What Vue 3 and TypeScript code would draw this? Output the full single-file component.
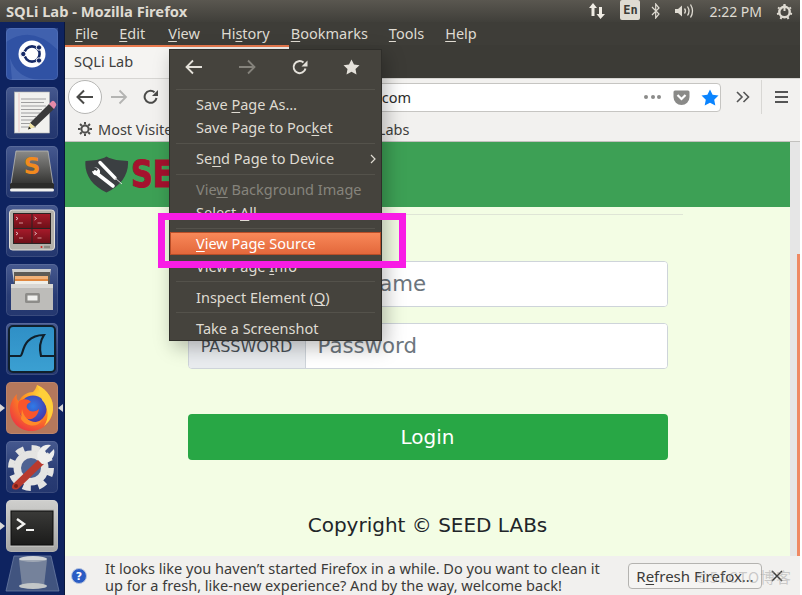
<script setup lang="ts">
const topMenus: [string, string, string][] = [
  ['', 'F', 'ile'],
  ['', 'E', 'dit'],
  ['', 'V', 'iew'],
  ['Hi', 's', 'tory'],
  ['', 'B', 'ookmarks'],
  ['', 'T', 'ools'],
  ['', 'H', 'elp'],
]
</script>

<template>
  <div class="screen">
    <header class="panel">
      <span class="win-title">SQLi Lab - Mozilla Firefox</span>
      <div class="tray">
        <svg class="tray-net" width="18" height="18" viewBox="0 0 18 18"><path d="M5 1 L9 6 H6.5 V14 H3.5 V6 H1 Z" fill="#f0ece4"/><path d="M12 16 L8 11 H10.5 V4 H13.5 V11 H16.5 Z" fill="#f0ece4" transform="translate(0.5 1)"/></svg>
        <span class="tray-en">En</span>
        <svg class="tray-bt" width="10" height="16" viewBox="0 0 10 16"><path d="M1 4 L8 11 L4.7 15 V1 L8 5 L1 12" fill="none" stroke="#dfdbd2" stroke-width="1.2"/></svg>
        <svg class="tray-vol" width="22" height="16" viewBox="0 0 22 16"><path d="M1 6 H4 L8 2.5 V13.5 L4 10 H1 Z" fill="#dfdbd2"/><path d="M10.5 5.5 Q12.5 8 10.5 10.5 M13.5 3.5 Q16.5 8 13.5 12.5 M16.5 1.5 Q20.5 8 16.5 14.5" fill="none" stroke="#dfdbd2" stroke-width="1.3"/></svg>
        <span class="clock">2:22 PM</span>
        <svg class="tray-pow" width="17" height="17" viewBox="0 0 17 17"><circle cx="8.5" cy="9" r="5.2" fill="none" stroke="#dfdbd2" stroke-width="2.4"/><path d="M8.5 1 V8" stroke="#dfdbd2" stroke-width="2"/><path d="M8.5 1.5 V3 M2 4.5 L3.5 5.5 M15 4.5 L13.5 5.5 M1 11 L3 10.5 M16 11 L14 10.5 M4.5 16 L5.5 14 M12.5 16 L11.5 14" stroke="#dfdbd2" stroke-width="2"/></svg>
      </div>
    </header>

    <div class="desk">
      <nav class="launcher">
        <div class="tile tile-ubuntu">
          <svg width="52" height="52" viewBox="0 0 52 52">
            <path d="M0 14 Q26 -4 52 22 V0 H0 Z" fill="#5f7fc4" opacity=".35"/>
            <path d="M4 30 Q10 50 34 52 H6 Z" fill="#6f8fd0" opacity=".3"/>
            <circle cx="26" cy="26" r="13.5" fill="#fff"/>
            <circle cx="26" cy="26" r="7.6" fill="none" stroke="#162a66" stroke-width="2.6"/>
            <circle cx="33" cy="19.5" r="2.7" fill="#162a66" stroke="#fff" stroke-width="1"/>
            <circle cx="17.3" cy="26" r="2.7" fill="#162a66" stroke="#fff" stroke-width="1"/>
            <circle cx="33" cy="32.5" r="2.7" fill="#162a66" stroke="#fff" stroke-width="1"/>
          </svg>
        </div>
        <div class="tile">
          <svg width="52" height="52" viewBox="0 0 52 52">
            <rect x="8.5" y="5" width="35" height="41" fill="#f1f1ee" stroke="#b4b4b0" stroke-width=".6"/>
            <path d="M13 6 V45" stroke="#e8a8a8" stroke-width=".6"/>
            <path d="M15 12 H40 M15 15.5 H38 M15 19 H40 M15 22.5 H36 M15 26 H34 M15 29.5 H30 M15 33 H27 M15 36.5 H24 M15 40 H30" stroke="#8a8a8a" stroke-width=".8"/>
            <path d="M24 36 L43 17 L48 22 L29 40 Z" fill="#3a3a3a"/>
            <path d="M43 17 L45.5 14.5 Q47 13 48.5 14.5 L50 16.5 Q51 18 49.5 19.5 L48 22 Z" fill="#e58aa8"/>
            <path d="M24 36 L29 40 L22 42.5 Z" fill="#efe2a0"/>
            <path d="M22 42.5 L23 39.5 L25 41.5 Z" fill="#222"/>
          </svg>
        </div>
        <div class="tile">
          <svg width="52" height="52" viewBox="0 0 52 52">
            <defs><linearGradient id="sublTop" x1="0" y1="0" x2="0" y2="1"><stop offset="0" stop-color="#8a8a88"/><stop offset="1" stop-color="#333331"/></linearGradient></defs>
            <path d="M10 5 H42 L47 38 H5 Z" fill="url(#sublTop)" stroke="#b9b9b5" stroke-width=".8"/>
            <rect x="4" y="37" width="44" height="6" rx="1.5" fill="#2b2b29"/>
            <rect x="4" y="42.5" width="44" height="3" rx="1.5" fill="#f2f2f0"/>
            <text x="26" y="28" text-anchor="middle" class="subl-s">S</text>
          </svg>
        </div>
        <div class="tile">
          <svg width="52" height="52" viewBox="0 0 52 52">
            <defs><linearGradient id="pane" x1="0" y1="0" x2="0" y2="1"><stop offset="0" stop-color="#a61a2a"/><stop offset="1" stop-color="#6e1018"/></linearGradient></defs>
            <rect x="3.5" y="5" width="45" height="40" rx="3" fill="#b3b1aa" stroke="#e2e0da" stroke-width="1"/>
            <rect x="7" y="8" width="38" height="31" fill="#2a2323"/>
            <rect x="8" y="9" width="17.5" height="14" fill="url(#pane)"/>
            <rect x="26.5" y="9" width="17.5" height="14" fill="url(#pane)"/>
            <rect x="8" y="24" width="17.5" height="14" fill="url(#pane)"/>
            <rect x="26.5" y="24" width="17.5" height="14" fill="url(#pane)"/>
            <path d="M10 12 L12 13.5 L10 15 M28.5 12 L30.5 13.5 L28.5 15 M10 27 L12 28.5 L10 30 M28.5 27 L30.5 28.5 L28.5 30" stroke="#fff" stroke-width=".7" fill="none"/>
            <path d="M13 18 H17 M31.5 18 H35.5 M13 33 H17 M31.5 33 H35.5" stroke="#f4c8c8" stroke-width=".7"/>
            <circle cx="35.5" cy="42" r="1" fill="#d02020"/>
            <rect x="38" y="40.8" width="6" height="2.4" fill="#8a8880"/>
          </svg>
        </div>
        <div class="tile">
          <svg width="52" height="52" viewBox="0 0 52 52">
            <path d="M6 5 H45 L43 19 H8 Z" fill="#cfcfcd"/>
            <rect x="8" y="8" width="36" height="14" fill="#5e5b56"/>
            <rect x="9" y="12" width="33" height="3" fill="#f2b279"/>
            <rect x="9" y="15" width="33" height="2" fill="#e08840"/>
            <rect x="9" y="17" width="33" height="4" fill="#f0efe8"/>
            <path d="M5 20 H47 V46 H5 Z" fill="#bdbcb9"/>
            <path d="M5 20 H47 V24 H5 Z" fill="#d8d7d4"/>
            <rect x="19" y="29" width="15" height="10" rx="1.5" fill="#8d8c89"/>
            <rect x="21.5" y="31.5" width="10" height="5" fill="#f0f0ee"/>
          </svg>
        </div>
        <div class="tile">
          <svg width="52" height="52" viewBox="0 0 52 52">
            <defs><linearGradient id="sharkBg" x1="0" y1="0" x2="0" y2="1"><stop offset="0" stop-color="#2f8fc6"/><stop offset="1" stop-color="#3ba0d2"/></linearGradient></defs>
            <rect x="3" y="3" width="46" height="46" rx="4" fill="url(#sharkBg)" stroke="#10202c" stroke-width="2"/>
            <path d="M4 33 H14 C17 33 16 24 22 18 C26 14 32 12 38 12 C34 18 33 25 35 33 H48" fill="none" stroke="#10202c" stroke-width="2.2"/>
          </svg>
        </div>
        <div class="tile tile-active">
          <svg width="52" height="52" viewBox="0 0 52 52">
            <defs>
              <radialGradient id="foxOuter" cx=".7" cy=".2" r="1"><stop offset="0" stop-color="#ffd43a"/><stop offset=".45" stop-color="#ff8a1e"/><stop offset="1" stop-color="#e8214a"/></radialGradient>
              <radialGradient id="foxGlobe" cx=".5" cy=".4" r=".7"><stop offset="0" stop-color="#2f7be8"/><stop offset="1" stop-color="#4a2a9a"/></radialGradient>
            </defs>
            <path d="M31 3 C42 8 48 18 47 28 C46 41 36 49 25 49 C13 49 4 39 4 28 C4 21 7 16 11 12 C10 16 11 18 13 19 C16 13 22 10 27 10 C29 8 30 6 31 3 Z" fill="url(#foxOuter)"/>
            <circle cx="27" cy="27" r="13.5" fill="url(#foxGlobe)"/>
            <path d="M31 3 C42 8 48 18 47 28 C46 36 42 41 38 44 C44 36 42 24 36 18 C36 13 33 8 31 3 Z" fill="#ffcf3a"/>
            <path d="M13 19 C18 16 23 17 25 20 C22 21 20 23 21 26 C24 31 30 30 33 27 C32 34 27 38 22 37 C14 35 10 27 13 19 Z" fill="#f9552c"/>
            <path d="M16 27 C18 38 28 43 36 38 C32 46 20 45 15 37 Z" fill="#ff8a2a"/>
          </svg>
        </div>
        <div class="tile">
          <svg width="52" height="52" viewBox="0 0 52 52">
            <circle cx="25" cy="27" r="17.5" fill="#e4e4e2"/>
            <circle cx="25" cy="27" r="20" fill="none" stroke="#e4e4e2" stroke-width="6" stroke-dasharray="8 7.7"/>
            <circle cx="25" cy="27" r="10" fill="#4e6292"/>
            <path d="M7 43 L33 18 L38 23 L12 48 Q8 49.5 6 47 Q5.5 45 7 43 Z" fill="#b83a2e"/>
            <path d="M32 19 Q29 10 37 5 Q41 3 45 4 L39 10 L42 14 L48 8 Q49.5 14 45 19 Q41 23 36 23 Z" fill="#eeeeec"/>
            <circle cx="10" cy="45" r="2" fill="#7c1e16"/>
          </svg>
        </div>
        <div class="tile tile-term">
          <svg width="52" height="52" viewBox="0 0 52 52">
            <rect x="4" y="9" width="44" height="38" fill="#bdbdba"/>
            <defs><linearGradient id="termBg" x1="0" y1="0" x2="0" y2="1"><stop offset="0" stop-color="#3a3a38"/><stop offset="1" stop-color="#1b1b1a"/></linearGradient></defs>
            <rect x="5" y="11" width="42" height="34" fill="url(#termBg)" stroke="#0c0c0c" stroke-width="1"/>
            <path d="M11 19 L18 24 L11 29" fill="none" stroke="#f2f2f0" stroke-width="2.4"/>
            <path d="M20 30 H28" stroke="#f2f2f0" stroke-width="2"/>
          </svg>
        </div>
        <div class="trash">
          <svg width="60" height="40" viewBox="0 0 60 40">
            <path d="M11 1 H48 L56 36 H3 Z" fill="#41547f" stroke="#6a7ba2" stroke-width=".8"/>
            <ellipse cx="30" cy="4" rx="14" ry="3" fill="#d0d3d6"/>
            <path d="M16 5 L19 31 H41 L44 5 Z" fill="#8c95a6" opacity=".7"/>
            <ellipse cx="30" cy="31" rx="14" ry="3" fill="#c3c7c8"/>
          </svg>
        </div>
        <i class="pip pip-l pip-fox"></i>
        <i class="pip pip-r pip-fox"></i>
        <i class="pip pip-l pip-term"></i>
      </nav>

      <main class="window">
        <div class="menubar">
          <span v-for="m in topMenus" :key="m[1] + m[2]">{{ m[0] }}<u>{{ m[1] }}</u>{{ m[2] }}</span>
        </div>

        <div class="tabbar">
          <div class="tab">SQLi Lab</div>
        </div>

        <div class="navbar">
          <button class="back">
            <svg width="20" height="20" viewBox="0 0 20 20"><path d="M18 10 H3 M9 3.5 L2.5 10 L9 16.5" fill="none" stroke="#4a4a48" stroke-width="2"/></svg>
          </button>
          <svg class="fwd" width="18" height="18" viewBox="0 0 18 18"><path d="M1 9 H15 M9.5 2.5 L16 9 L9.5 15.5" fill="none" stroke="#b4b4b2" stroke-width="1.8"/></svg>
          <svg class="rld" width="16" height="16" viewBox="0 0 16 16"><path d="M13.5 9 A6 6 0 1 1 11.5 3.2" fill="none" stroke="#4a4a48" stroke-width="2"/><path d="M15 1 V7 H9 Z" fill="#4a4a48"/></svg>
          <div class="urlbar">
            <span class="url">www.seedlabsqlinjection.com</span>
            <span class="dots"><i></i><i></i><i></i></span>
            <svg class="pocket" width="17" height="15" viewBox="0 0 17 15"><path d="M2 0.5 H15 Q16.5 0.5 16.5 2 V7 A8 8 0 0 1 0.5 7 V2 Q0.5 0.5 2 0.5 Z" fill="#8a8a88"/><path d="M4.5 5 L8.5 9 L12.5 5" fill="none" stroke="#fff" stroke-width="2.2"/></svg>
            <svg class="star" width="18" height="17" viewBox="0 0 18 17"><path d="M9 0.5 L11.6 5.8 L17.5 6.6 L13.2 10.7 L14.3 16.5 L9 13.7 L3.7 16.5 L4.8 10.7 L0.5 6.6 L6.4 5.8 Z" fill="#0a84ff"/></svg>
          </div>
          <svg class="more" width="14" height="12" viewBox="0 0 14 12"><path d="M1 1 L6 6 L1 11 M7.5 1 L12.5 6 L7.5 11" fill="none" stroke="#555" stroke-width="1.6"/></svg>
          <i class="divider"></i>
          <svg class="burger" width="13" height="12" viewBox="0 0 13 12"><path d="M0 1 H13 M0 6 H13 M0 11 H13" stroke="#555" stroke-width="2"/></svg>
        </div>

        <div class="bookmarks">
          <svg class="gear" width="14" height="14" viewBox="0 0 14 14"><circle cx="7" cy="7" r="3.6" fill="none" stroke="#4f4f4d" stroke-width="2"/><path d="M7 0 V2.5 M7 11.5 V14 M0 7 H2.5 M11.5 7 H14 M2 2 L3.8 3.8 M10.2 10.2 L12 12 M2 12 L3.8 10.2 M10.2 3.8 L12 2" stroke="#4f4f4d" stroke-width="2"/></svg>
          <span>Most Visited</span>
          <span class="bm-labs">SEED Labs</span>
        </div>

        <div class="content">
          <div class="page">
            <div class="hero">
              <svg class="shield" width="44" height="37" viewBox="0 0 44 37">
                <path d="M21.5 0.5 C27 4 35 4.5 43 5 C44 18 36 30 21.5 36.5 C7 30 -1 18 0.5 5 C8 4.5 16 4 21.5 0.5 Z" fill="#3b3f42"/>
                <path d="M15 6.5 L30 22" stroke="#fff" stroke-width="3.4" stroke-linecap="round"/>
                <path d="M30 22 L37 28" stroke="#d9d9d9" stroke-width="1"/>
                <path d="M10 16 L28 30" stroke="#fff" stroke-width="3.6" stroke-linecap="round"/>
                <path d="M9 11 L13 13 L11 16 L7 15 Q8 20 12 19 L15 17 Q16 12 9 11 Z" fill="#fff"/>
              </svg>
              <span class="brand">SEED</span>
            </div>
            <div class="body">
              <hr class="rule" />
              <form class="form" @submit.prevent>
                <div class="group">
                  <span class="addon">USERNAME</span>
                  <input class="field" type="text" placeholder="Username" />
                </div>
                <div class="group">
                  <span class="addon">PASSWORD</span>
                  <input class="field" type="password" placeholder="Password" />
                </div>
                <button class="login" type="button">Login</button>
              </form>
              <p class="copy">Copyright © SEED LABs</p>
            </div>
          </div>
          <div class="scroll"><i></i></div>
        </div>

        <div class="notice">
          <svg class="q" width="16" height="16" viewBox="0 0 16 16">
            <circle cx="8" cy="8" r="7.5" fill="#2a5cc4" stroke="#b8c4de" stroke-width="1"/>
            <text x="8" y="12" text-anchor="middle" class="q-mark">?</text>
          </svg>
          <p class="notice-text">It looks like you haven’t started Firefox in a while. Do you want to clean it<br />up for a fresh, like-new experience? And by the way, welcome back!</p>
          <button class="refresh">R<u>e</u>fresh Firefox…</button>
          <svg class="close" width="12" height="12" viewBox="0 0 12 12"><path d="M1 1 L11 11 M11 1 L1 11" stroke="#3c3c3a" stroke-width="1.5"/></svg>
          <span class="mark">©51CTO博客</span>
        </div>

        <div class="ctx">
          <div class="ctx-nav">
            <svg width="18" height="16" viewBox="0 0 18 16"><path d="M17 8 H2 M8 1.5 L1.5 8 L8 14.5" fill="none" stroke="#e4e1da" stroke-width="1.8"/></svg>
            <svg width="18" height="16" viewBox="0 0 18 16"><path d="M1 8 H16 M10 1.5 L16.5 8 L10 14.5" fill="none" stroke="#85837c" stroke-width="1.8"/></svg>
            <svg width="16" height="16" viewBox="0 0 16 16"><path d="M13.5 9.5 A6 6 0 1 1 11.5 3.5" fill="none" stroke="#e4e1da" stroke-width="2"/><path d="M15.5 1.5 V7.5 H9.5 Z" fill="#e4e1da"/></svg>
            <svg width="17" height="16" viewBox="0 0 17 16"><path d="M8.5 0.5 L11 5.5 L16.5 6.2 L12.5 10 L13.5 15.5 L8.5 12.8 L3.5 15.5 L4.5 10 L0.5 6.2 L6 5.5 Z" fill="#e4e1da"/></svg>
          </div>
          <div class="sep"></div>
          <div class="item">Save <u>P</u>age As…</div>
          <div class="item">Save Page to Poc<u>k</u>et</div>
          <div class="sep"></div>
          <div class="item item-sub"><span>Se<u>n</u>d Page to Device</span><svg width="6" height="10" viewBox="0 0 6 10"><path d="M1 1 L5 5 L1 9" fill="none" stroke="#dfdbd2" stroke-width="1.2"/></svg></div>
          <div class="sep"></div>
          <div class="item off">Vie<u>w</u> Background Image</div>
          <div class="item">Select <u>A</u>ll</div>
          <div class="sep sep-tight"></div>
          <div class="item hot"><u>V</u>iew Page Source</div>
          <div class="item">View Page <u>I</u>nfo</div>
          <div class="sep"></div>
          <div class="item">Inspect Element (<u>Q</u>)</div>
          <div class="sep"></div>
          <div class="item">Take a Screenshot</div>
        </div>
      </main>
    </div>
    <div class="callout"></div>
  </div>
</template>

<style>
html, body { background: #fff; }
</style>

<style scoped>
.screen {
  position: relative;
  width: 800px;
  height: 595px;
  overflow: hidden;
  display: flex;
  flex-direction: column;
  font-family: "Noto Sans", sans-serif;
  font-size: 14.5px;
}
u { text-underline-offset: 2px; text-decoration-thickness: 1px; }
.panel {
  height: 22px;
  flex: none;
  display: flex;
  align-items: center;
  justify-content: space-between;
  background: linear-gradient(#5a5750, #403f3a);
  color: #dfdbd2;
}
.win-title { margin-left: 6px; font-weight: 700; font-size: 14.7px; white-space: nowrap; }
.tray { display: flex; align-items: center; height: 22px; }
.tray-net { margin-right: 14px; }
.tray-en {
  width: 20px; height: 20px; margin-top: -2px; margin-right: 11px;
  background: #dfdbd2; color: #3c3b37; border-radius: 2px;
  font: 700 12px "DejaVu Sans Mono", monospace;
  display: flex; align-items: center; justify-content: center;
}
.tray-bt { margin-right: 13px; }
.tray-vol { margin-right: 13px; }
.clock { font-size: 14px; margin-right: 14px; white-space: nowrap; }
.tray-pow { margin-right: 7px; }

.desk { flex: 1; display: flex; min-height: 0; }
.launcher {
  position: relative;
  width: 65px;
  flex: none;
  box-sizing: border-box;
  background: #0e2360;
  border-right: 1px solid #0a173c;
  padding: 6px 0 0 6px;
  display: flex;
  flex-direction: column;
  gap: 7px;
  overflow: hidden;
}
.tile {
  width: 52px;
  height: 52px;
  flex: none;
  border-radius: 5px;
  background: linear-gradient(#46598f, #2a3d75 60%, #24376f);
  box-shadow: inset 0 0 0 1px rgba(255,255,255,.1);
}
.tile svg { display: block; }
.tile-ubuntu { background: #3052a4; }
.tile-active { background: #b4785c; }
.tile-term { background: linear-gradient(#cfcfcd, #a6a6a4); }
.subl-s { font: 700 23px "DejaVu Sans", sans-serif; fill: #f28a1e; }
.trash { margin: -4px 0 0 -3px; flex: none; height: 40px; }
.trash svg { display: block; }
.pip { position: absolute; width: 0; height: 0; border-style: solid; border-color: transparent; }
.pip-l { left: 0; border-width: 4px 0 4px 5px; border-left-color: #d8d8d8; }
.pip-r { right: 1px; border-width: 4px 5px 4px 0; border-right-color: #d8d8d8; }
.pip-fox { top: 382px; }
.pip-term { top: 500px; }

.window { position: relative; flex: 1; min-width: 0; display: flex; flex-direction: column; }
.menubar {
  height: 23px; flex: none;
  display: flex; align-items: center; gap: 21px;
  padding: 0 0 1px 10px;
  box-sizing: border-box;
  background: #3e3d38;
  color: #dfdbd2;
  white-space: nowrap;
}
.menubar span:nth-child(2) { margin-right: 2px; }
.tabbar { height: 33px; flex: none; background: #3c3b36; display: flex; }
.tab {
  width: 224px; box-sizing: border-box;
  background: #f5f4f2; border-top: 2px solid #ea7a4e;
  padding: 4px 0 0 9px;
  color: #3f3f3d;
}
.navbar {
  height: 38px; flex: none;
  display: flex; align-items: center;
  background: #f2f1ef;
  box-shadow: inset 0 1px 0 #d6d5d2;
  padding-left: 3px;
}
.back {
  width: 34px; height: 34px; padding: 0; flex: none;
  border-radius: 50%; border: 1px solid #b6b6b4; background: #fff;
  display: flex; align-items: center; justify-content: center;
}
.fwd { margin-left: 8px; flex: none; }
.rld { margin-left: 15px; flex: none; }
.urlbar {
  margin-left: 10px;
  width: 552px; height: 29px; flex: none; box-sizing: border-box;
  background: #fff; border: 1px solid #c6c5c2; border-radius: 4px;
  display: flex; align-items: center;
  color: #2c2c2a;
}
.url { width: 241px; margin-right: 1px; flex: none; text-align: right; white-space: nowrap; overflow: hidden; direction: rtl; }
.dots { margin-left: 232px; display: flex; gap: 2.5px; }
.dots i { width: 4px; height: 4px; border-radius: 50%; background: #8b8b89; }
.pocket { margin-left: 12px; flex: none; }
.star { margin-left: 11px; flex: none; }
.more { margin-left: 15px; flex: none; }
.divider { width: 1px; height: 34px; margin-left: 11px; background: #d8d7d4; flex: none; }
.burger { margin-left: 13px; flex: none; }
.bookmarks {
  height: 26px; flex: none; box-sizing: border-box;
  display: flex; align-items: center;
  background: #f2f1ef; border-bottom: 1px solid #c2c1be;
  padding-left: 13px;
  color: #3f3f3d;
  white-space: nowrap;
}
.gear { margin-right: 6px; flex: none; }
.bm-labs { margin-left: 158px; }

.content { flex: 1; min-height: 0; display: flex; }
.page { flex: 1; min-width: 0; background: #f3fde4; display: flex; flex-direction: column; }
.hero {
  height: 65px; flex: none;
  background: #3da055;
  display: flex; align-items: center;
  padding-left: 20px;
  overflow: hidden;
}
.shield { flex: none; margin-top: -1px; }
.brand {
  margin-left: 2px;
  font: 700 37px "DejaVu Sans", sans-serif;
  color: #a5112e;
  -webkit-text-stroke: 1px #a5112e;
  transform: scaleX(.82);
  transform-origin: left center;
  line-height: 1;
}
.body { flex: 1; display: flex; flex-direction: column; align-items: center; font-family: "DejaVu Sans", sans-serif; }
.rule { width: 510px; margin: 7px 0 0; border: 0; border-top: 1px solid #dfe5d6; height: 0; }
.form { width: 480px; margin-top: 46px; display: flex; flex-direction: column; gap: 16px; }
.group {
  height: 46px; box-sizing: border-box;
  display: flex;
  border: 1px solid #ced4da; border-radius: 4px;
  background: #fff;
  overflow: hidden;
}
.addon {
  width: 117px; flex: none; box-sizing: border-box;
  background: #e9ecef; border-right: 1px solid #ced4da;
  display: flex; align-items: center; justify-content: center;
  font-size: 16px; color: #495057;
}
.field {
  flex: 1; min-width: 0; border: 0; outline: 0;
  padding: 0 12px 2px;
  font: 21.3px "DejaVu Sans", sans-serif;
  background: #fff;
}
.field::placeholder { color: #6c757d; opacity: 1; }
.login {
  height: 46px; margin-top: 29px;
  background: #28a745; color: #fff;
  border: 0; border-radius: 4px;
  font: 20px "DejaVu Sans", sans-serif;
}
.copy { margin: 53px 0 0; font-size: 20px; color: #212529; line-height: 24px; }
.scroll { position: relative; width: 10px; flex: none; background: #e6e6e6; }
.scroll i { position: absolute; right: 0; top: 112px; bottom: 0; width: 3px; background: #ef8a64; }

.notice {
  position: relative;
  height: 39px; flex: none; box-sizing: border-box;
  display: flex; align-items: center;
  background: #f1f0ee;
  color: #3b3b39;
}
.q { margin-left: 6px; flex: none; }
.q-mark { font: 700 11px "DejaVu Sans", sans-serif; fill: #fff; }
.notice-text { margin: 2px 0 0 18px; width: 505px; flex: none; line-height: 17px; white-space: nowrap; font-size: 14.55px; }
.refresh {
  margin-left: 18px; width: 134px; height: 26px; flex: none; padding: 0;
  background: #f5f4f2; border: 1px solid #b4b3b0; border-radius: 4px;
  font: 15px "Noto Sans", sans-serif; color: #3b3b39; white-space: nowrap;
}
.close { margin-left: 9px; flex: none; }
.mark {
  position: absolute; left: 631px; top: 10px;
  font: 15px/22px "Noto Sans CJK SC", "Noto Sans", sans-serif;
  letter-spacing: 1px;
  color: rgba(150,150,150,.45); white-space: nowrap;
}

.ctx {
  position: absolute; left: 104px; top: 27px;
  width: 213px; height: 292px; box-sizing: border-box;
  background: #45433d;
  border: 1px solid #2f2e2a;
  box-shadow: 4px 6px 18px rgba(0,0,0,.28);
  color: #dfdbd2;
  display: flex; flex-direction: column;
  white-space: nowrap;
}
.ctx-nav { height: 39px; flex: none; display: flex; align-items: center; justify-content: space-between; padding: 0 21px 6px 15px; box-sizing: border-box; }
.ctx-nav svg { display: block; }
.sep { height: 1px; flex: none; margin: 3px 6px 4px; background: #54524b; }
.ctx-nav + .sep { margin-top: 0; }
.sep-tight { margin-bottom: 3px; }
.item { height: 23px; flex: none; box-sizing: border-box; padding-left: 26px; line-height: 21px; }
.hot, .hot ~ .item { line-height: 23px; }
.item-sub { display: flex; align-items: center; justify-content: space-between; padding: 0 5px 2px 26px; }
.off { color: #86847c; }
.hot {
  background: linear-gradient(#f98a5a, #e2663a);
  box-shadow: inset 0 0 0 1px #b84e28;
  color: #fff;
}
.callout {
  position: absolute; left: 158px; top: 213px;
  width: 248px; height: 55px; box-sizing: border-box;
  border: 7px solid #f81ce5;
}
</style>
